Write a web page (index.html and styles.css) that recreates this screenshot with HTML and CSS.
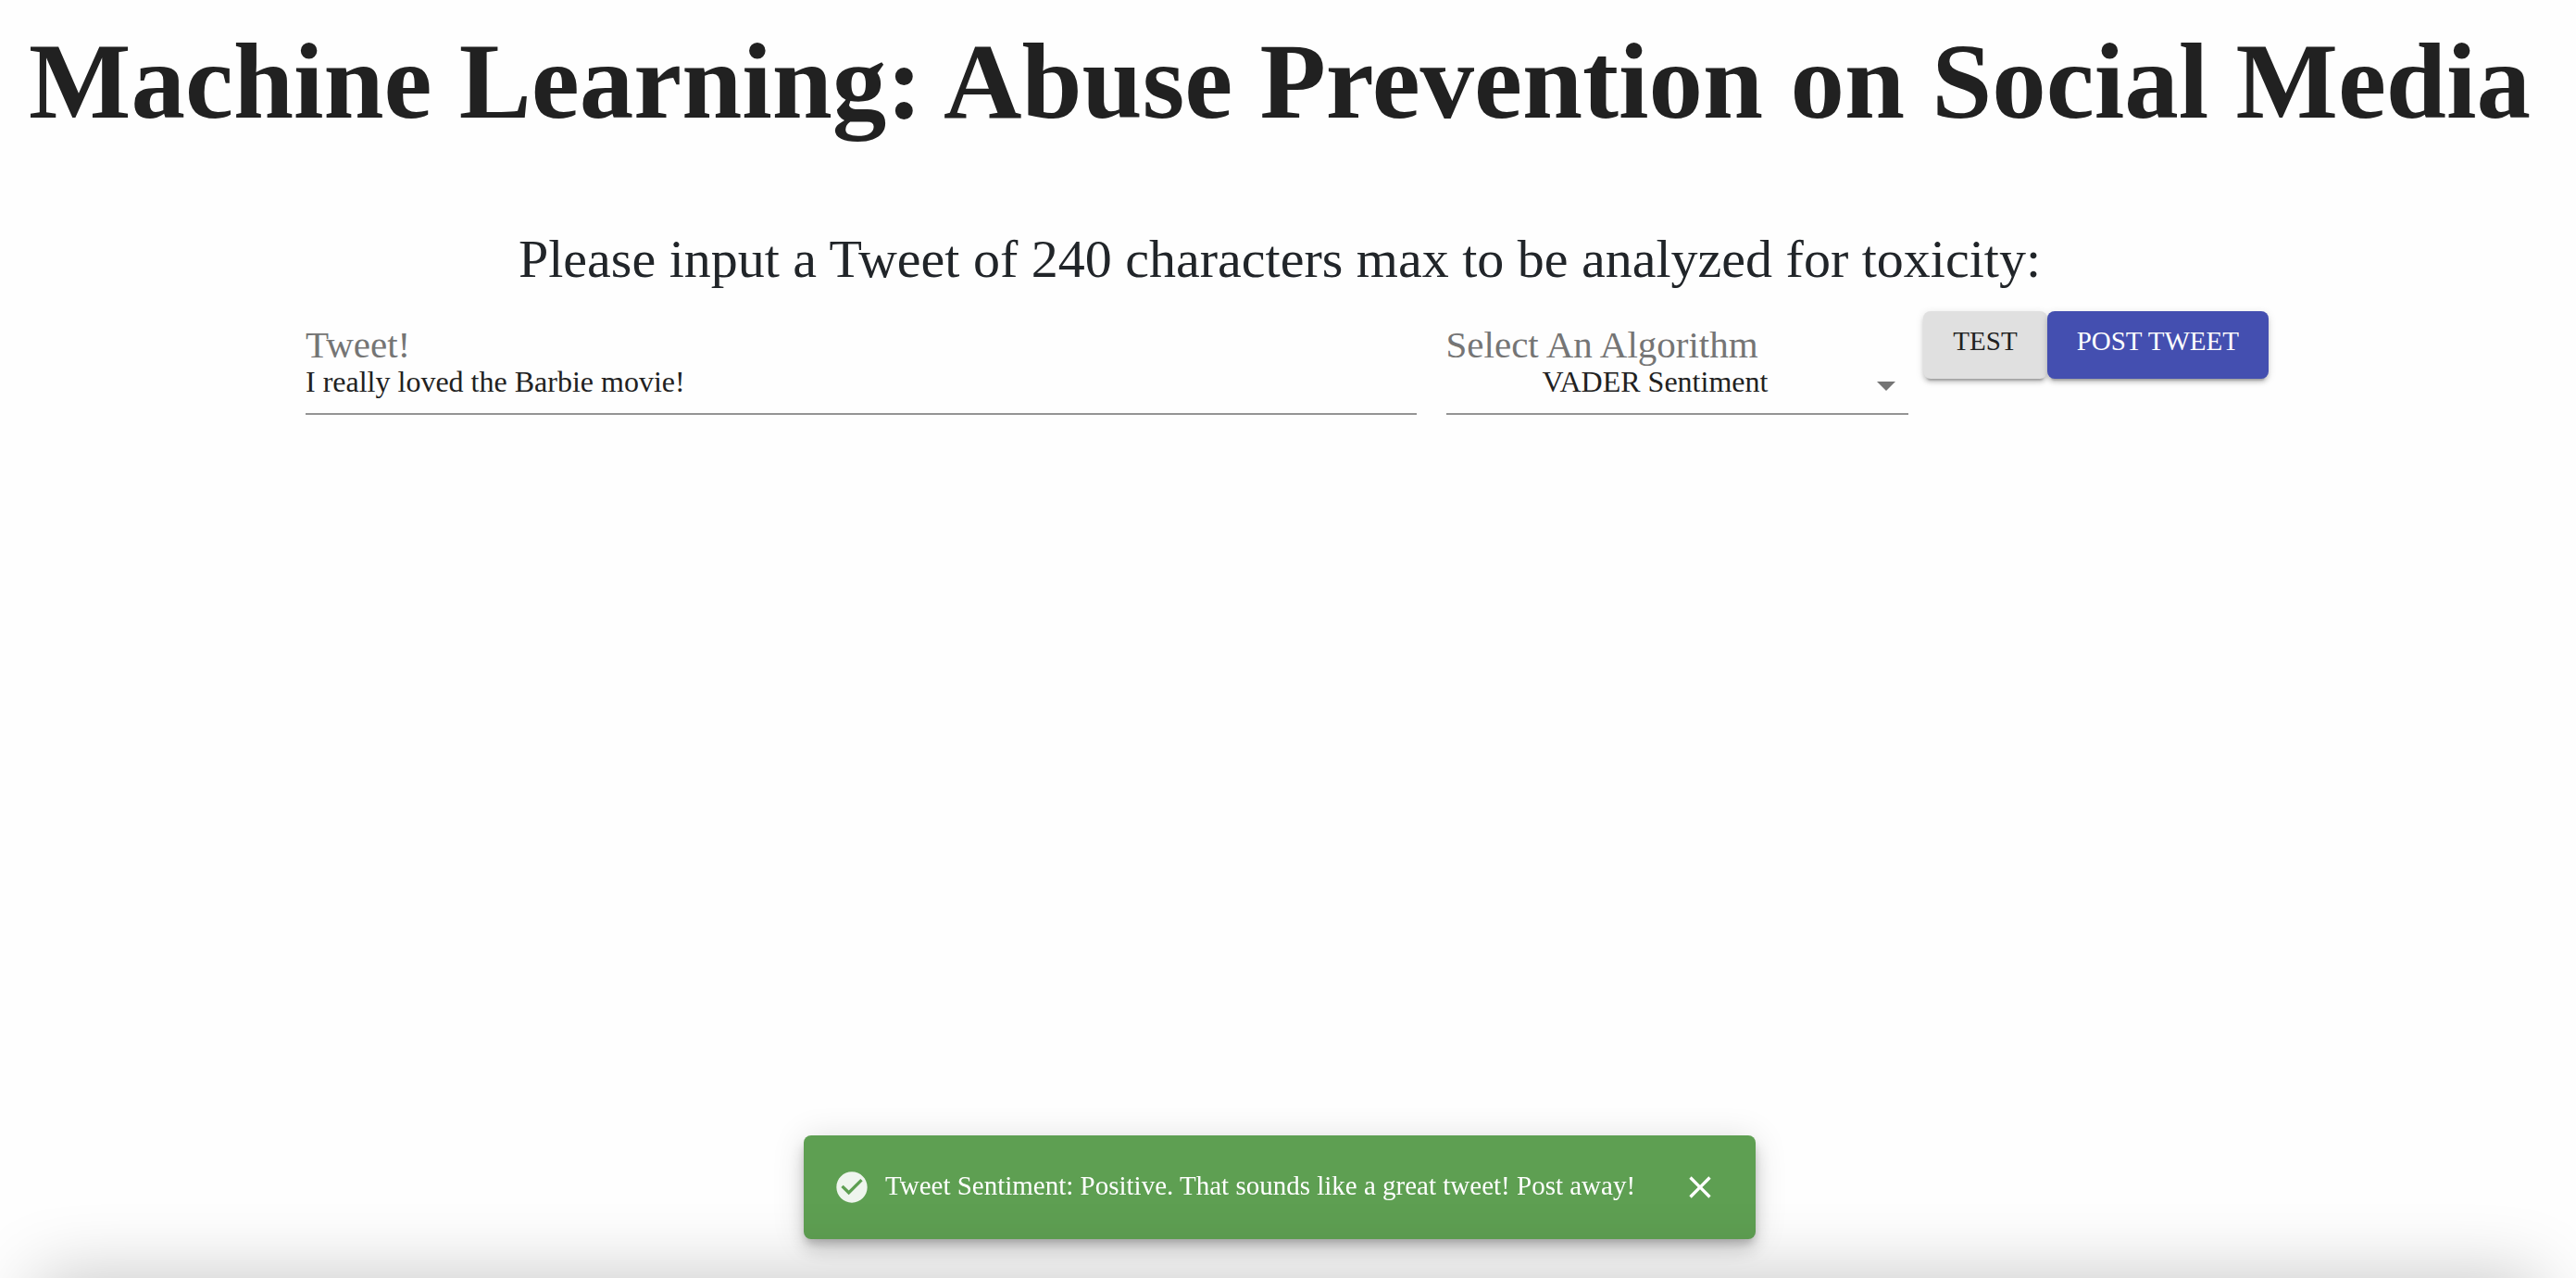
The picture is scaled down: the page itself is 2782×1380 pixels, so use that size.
FILE: index.html
```html
<!DOCTYPE html>
<html lang="en">
<head>
  <meta charset="utf-8">
  <title>Machine Learning: Abuse Prevention on Social Media</title>
  <link rel="stylesheet" href="styles.css">
</head>
<body>
  <main class="page">
    <h1 class="title">Machine Learning: Abuse Prevention on Social Media</h1>
    <h2 class="subtitle">Please input a Tweet of 240 characters max to be analyzed for toxicity:</h2>
    <form class="tweet-form">
      <div class="field field-tweet">
        <label class="field-label" for="tweet">Tweet!</label>
        <input class="field-control" id="tweet" type="text" maxlength="240" value="I really loved the Barbie movie!">
      </div>
      <div class="field field-algorithm">
        <label class="field-label" for="algorithm">Select An Algorithm</label>
        <div class="select-wrap">
          <select class="field-control field-select" id="algorithm">
            <option selected>VADER Sentiment</option>
          </select>
          <svg class="select-arrow" viewBox="0 0 24 24" aria-hidden="true"><path d="M7 10l5 5 5-5z"/></svg>
        </div>
      </div>
      <div class="actions">
        <button class="button button-test" type="button">TEST</button>
        <button class="button button-post" type="button">POST TWEET</button>
      </div>
    </form>
  </main>

  <div class="snackbar">
    <div class="alert" role="alert">
      <svg class="icon icon-success" viewBox="0 0 24 24" aria-hidden="true"><path d="M12 2C6.48 2 2 6.48 2 12s4.48 10 10 10 10-4.48 10-10S17.52 2 12 2zm-2 15l-5-5 1.41-1.41L10 14.17l7.59-7.59L19 8l-9 9z"/></svg>
      <span class="alert-text">Tweet Sentiment: Positive. That sounds like a great tweet! Post away!</span>
      <button class="alert-close" type="button" aria-label="Close">
        <svg class="icon" viewBox="0 0 24 24" aria-hidden="true"><path d="M19 6.41L17.59 5 12 10.59 6.41 5 5 6.41 10.59 12 5 17.59 6.41 19 12 13.41 17.59 19 19 17.59 13.41 12z"/></svg>
      </button>
    </div>
  </div>
  <div class="bottom-shade"></div>
</body>
</html>
```
FILE: styles.css
```css
* {
  box-sizing: border-box;
}

body {
  margin: 0;
  background: #fefefe;
  color: #212121;
  font-family: "Liberation Serif", "Times New Roman", serif;
}

.page {
  padding: 20px 18px 0 0;
}

.title {
  margin: 0;
  font-size: 117px;
  font-weight: 700;
  line-height: 136px;
  text-align: center;
}

.subtitle {
  margin: 92px 0 24px;
  color: #212529;
  font-size: 58px;
  font-weight: 400;
  line-height: 64px;
  text-align: center;
}

.tweet-form {
  display: flex;
  align-items: flex-start;
  max-width: 2136px;
  margin: 0 auto;
  padding-left: 16px;
}

.field {
  min-width: 0;
  padding-top: 16px;
}

.field-tweet {
  flex: 12 1 0;
  margin-right: 32px;
}

.field-algorithm {
  flex: 5 1 0;
  margin-right: 16px;
}

.field-label {
  display: block;
  color: #757575;
  font-size: 41px;
  line-height: 40px;
  white-space: nowrap;
}

.field-control {
  display: block;
  width: 100%;
  height: 56px;
  margin: 0;
  padding: 0 0 14px;
  border: 0;
  border-bottom: 2px solid #949494;
  border-radius: 0;
  outline: 0;
  background: transparent;
  color: #212121;
  font-family: inherit;
  font-size: 32px;
  line-height: 40px;
}

.select-wrap {
  position: relative;
}

.field-select {
  padding-right: 48px;
  appearance: none;
  text-align: center;
  text-align-last: center;
}

.select-arrow {
  position: absolute;
  top: 0;
  right: 0;
  width: 48px;
  height: 48px;
  fill: #757575;
  pointer-events: none;
}

.actions {
  display: flex;
  flex: 0 0 372px;
}

.button {
  padding: 12px 32px 20px;
  border: 0;
  border-radius: 8px;
  box-shadow: 0 6px 2px -4px rgba(0, 0, 0, 0.2), 0 4px 4px rgba(0, 0, 0, 0.14), 0 2px 10px rgba(0, 0, 0, 0.12);
  font-family: inherit;
  font-size: 29px;
  line-height: 41px;
  white-space: nowrap;
}

.button-test {
  background: #e0e0e0;
  color: #212121;
}

.button-post {
  flex: 1;
  background: #444fb0;
  color: #fff;
}

.snackbar {
  position: fixed;
  right: 18px;
  bottom: 42px;
  left: 0;
  display: flex;
  justify-content: center;
}

.alert {
  display: flex;
  align-items: center;
  gap: 16px;
  min-width: 1028px;
  height: 112px;
  padding: 0 40px 0 32px;
  border-radius: 8px;
  background: #5e9f52;
  box-shadow: 0 6px 10px -2px rgba(0, 0, 0, 0.2), 0 12px 20px rgba(0, 0, 0, 0.14), 0 2px 36px rgba(0, 0, 0, 0.12);
  color: #fff;
  font-size: 29px;
  line-height: 40px;
}

.alert-text {
  padding-bottom: 4px;
}

.icon {
  display: block;
  width: 40px;
  height: 40px;
  fill: currentColor;
}

.icon-success {
  opacity: 0.9;
}

.alert-close {
  margin-left: auto;
  padding: 0;
  border: 0;
  background: none;
  color: inherit;
}

/* Soft shadow rising from below the window's lower edge */
.bottom-shade {
  position: fixed;
  top: 100%;
  right: 40px;
  left: 40px;
  height: 200px;
  box-shadow: 0 0 80px rgba(0, 0, 0, 0.23);
  pointer-events: none;
}
```
